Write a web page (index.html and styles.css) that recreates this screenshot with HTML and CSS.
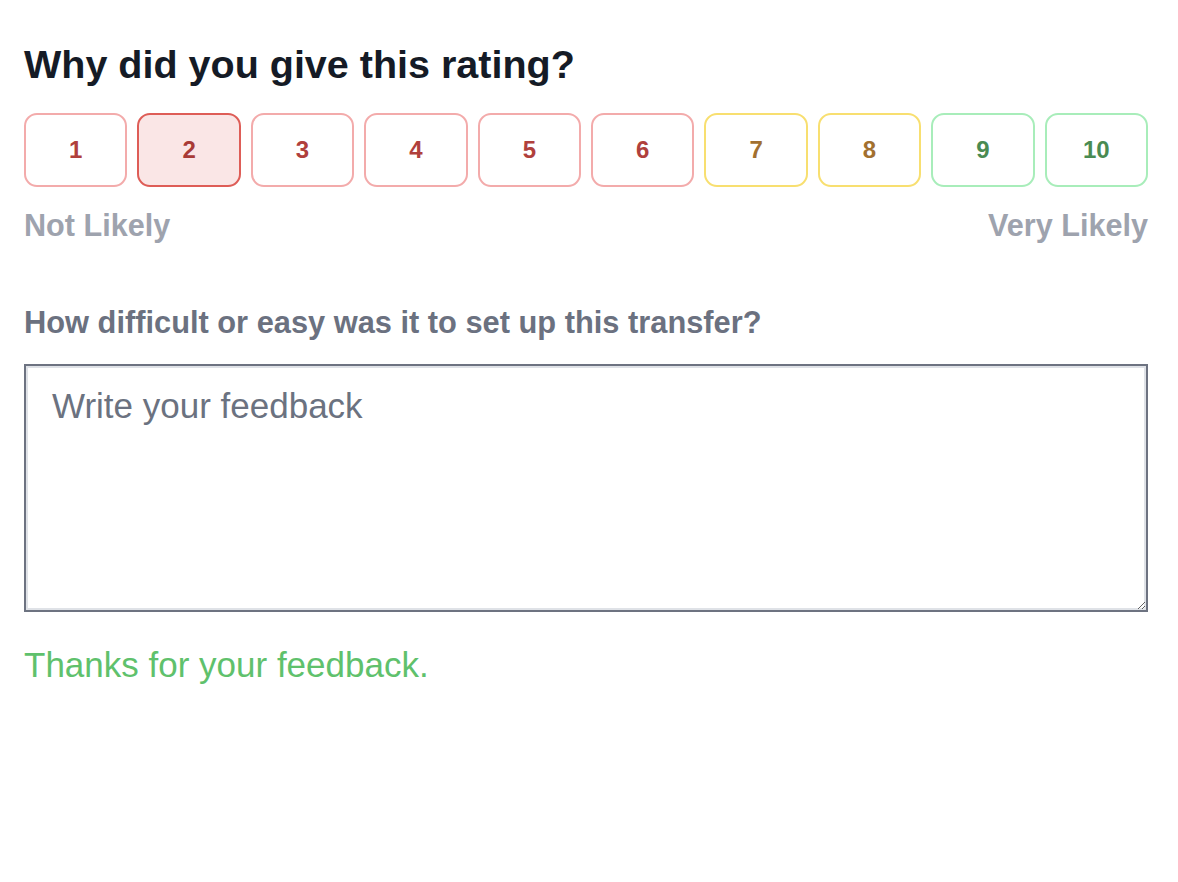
FILE: index.html
```html
<html>
<head>
<meta charset="utf-8">
<title>Feedback</title>
<link rel="stylesheet" href="styles.css">
</head>
<body>

<div class="survey">
    <h2 class="title">Why did you give this rating?</h2>

    <div class="scale">
        <button class="score low">1</button>
        <button class="score low selected">2</button>
        <button class="score low">3</button>
        <button class="score low">4</button>
        <button class="score low">5</button>
        <button class="score low">6</button>
        <button class="score mid">7</button>
        <button class="score mid">8</button>
        <button class="score high">9</button>
        <button class="score high">10</button>
    </div>

    <div class="legend">
        <span>Not Likely</span>
        <span>Very Likely</span>
    </div>

    <label class="question" for="feedback">How difficult or easy was it to set up this transfer?</label>
    <textarea id="feedback" class="feedback" placeholder="Write your feedback"></textarea>

    <p class="thanks">Thanks for your feedback.</p>
</div>

</body>
</html>
```

FILE: styles.css
```css
body {
    margin: 0;
    background: #fff;
    font-family: "Liberation Sans", Helvetica, Arial, sans-serif;
}

.survey {
    padding: 40px 30px 40px 24px;
    display: flex;
    flex-direction: column;
}

.title {
    margin: 0;
    font-size: 39.5px;
    line-height: 48px;
    font-weight: 700;
    color: #151b26;
}

.scale {
    display: flex;
    gap: 10px;
    margin-top: 25px;
}

.score {
    flex: 1;
    height: 74px;
    border: 2px solid #f3abab;
    border-radius: 13px;
    background: #fff;
    font-family: inherit;
    font-size: 24px;
    font-weight: 700;
    color: #b0403c;
    display: flex;
    align-items: center;
    justify-content: center;
    padding: 0;
}

.score.selected {
    border-color: #de5d57;
    background: #fae6e6;
    color: #a83a36;
}

.score.mid {
    border-color: #f8df70;
    color: #a2702f;
}

.score.high {
    border-color: #a8edba;
    color: #4a8b52;
}

.legend {
    display: flex;
    justify-content: space-between;
    margin-top: 20px;
    font-size: 30.6px;
    line-height: 36px;
    font-weight: 700;
    color: #9ea3ae;
}

.question {
    margin-top: 62px;
    font-size: 30.8px;
    line-height: 36px;
    font-weight: 700;
    color: #6b7180;
}

.feedback {
    margin-top: 23px;
    height: 248px;
    box-sizing: border-box;
    padding: 20px 26px;
    border: 2px solid #6d7381;
    box-shadow: inset 0 0 0 2px #dfe2e7;
    font-family: inherit;
    font-size: 35px;
    line-height: 40px;
    color: #374151;
    resize: vertical;
    outline: none;
}

.feedback::placeholder {
    color: #6b7280;
}

.thanks {
    margin: 33px 0 0;
    font-size: 35px;
    line-height: 40px;
    color: #5fc16c;
}
```
